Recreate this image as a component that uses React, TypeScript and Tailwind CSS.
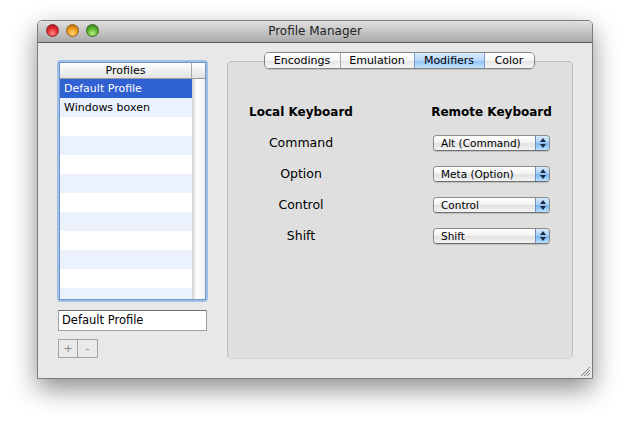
import React from "react";

const rows = Array.from({ length: 12 });

function Popup({ label }: { label: string }) {
  return (
    <div className="ml-[1px] h-[16px] w-[117px] flex rounded-[4px] border border-[#8c8c8c] border-b-[#707070] overflow-hidden shadow-[0_1px_1px_rgba(0,0,0,0.15)]">
      <div className="flex-1 flex items-center pl-[7px] text-[10.5px] text-black bg-[linear-gradient(to_bottom,#ffffff_0%,#f4f4f4_45%,#e2e2e2_55%,#f3f3f3_100%)] leading-none whitespace-nowrap">
        {label}
      </div>
      <div className="w-[14px] border-l border-[#6e8fb8] flex flex-col items-center justify-center gap-[2px] bg-[linear-gradient(to_bottom,#d8ebfd_0%,#a7cff7_45%,#7ab6f0_55%,#b9e0ff_100%)]">
        <svg width="6" height="4" viewBox="0 0 6 4"><path d="M0 4 L3 0 L6 4 Z" fill="#1d2b45" /></svg>
        <svg width="6" height="4" viewBox="0 0 6 4"><path d="M0 0 L3 4 L6 0 Z" fill="#1d2b45" /></svg>
      </div>
    </div>
  );
}

function Light({ c }: { c: string }) {
  return <div className={"w-[13px] h-[13px] rounded-full " + c} />;
}

export default function App() {
  return (
    <div className="w-[635px] h-[431px] bg-white pl-[37px] pt-[20px] font-['DejaVu_Sans',sans-serif] overflow-hidden">
      <div className="w-[556px] h-[359px] rounded-t-[5px] border border-[#7c7c7c] shadow-[0_10px_26px_rgba(0,0,0,0.45)] flex flex-col overflow-hidden">
        {/* title bar */}
        <div className="h-[22px] shrink-0 border-b border-[#5a5a5a] bg-gradient-to-b from-[#e0e0e0] to-[#aaaaaa] grid grid-cols-[1fr_auto_1fr]">
          <div className="flex items-start gap-[7px] pl-[8px] pt-[3px]">
            <Light c="bg-[radial-gradient(circle_at_50%_75%,#ff8a80_0%,#e02a34_50%,#9a0c16_100%)] border border-[#8a2a2a]" />
            <Light c="bg-[radial-gradient(circle_at_50%_75%,#ffd27a_0%,#f09a1c_50%,#ad6206_100%)] border border-[#8a6020]" />
            <Light c="bg-[radial-gradient(circle_at_50%_75%,#b8ee88_0%,#5cb52e_50%,#2a7010_100%)] border border-[#3f6a25]" />
          </div>
          <div className="flex items-center text-[12px] text-[#222] leading-none pb-[1px] whitespace-nowrap">Profile Manager</div>
          <div />
        </div>

        {/* body */}
        <div className="relative flex-1 bg-[#e8e8e8] flex items-start pl-[19px]">
          {/* left column */}
          <div className="mt-[17px] w-[151px] flex flex-col">
            <div className="h-[242px] rounded-[4px] bg-[#9fbfe7] p-[2px]">
              <div className="h-full border border-[#6f97cc] bg-white flex flex-col overflow-hidden">
                <div className="h-[16px] shrink-0 flex border-b border-[#9c9c9c] bg-gradient-to-b from-white to-[#e2e2e2]">
                  <div className="w-[132px] border-r border-[#a8a8a8] flex items-center justify-center text-[11px] leading-none text-black">Profiles</div>
                  <div className="flex-1" />
                </div>
                <div className="flex-1 flex overflow-hidden">
                  <div className="w-[132px] flex flex-col">
                    {rows.map((_, i) => (
                      <div
                        key={i}
                        className={
                          "h-[19px] shrink-0 flex items-center pl-[4px] text-[11px] leading-none " +
                          (i === 0
                            ? "bg-[#2f61d3] text-white"
                            : i % 2 === 1
                            ? "bg-[#ebf1fd] text-black"
                            : "bg-white text-black")
                        }
                      >
                        {i === 0 ? "Default Profile" : i === 1 ? "Windows boxen" : ""}
                      </div>
                    ))}
                  </div>
                  <div className="flex-1 bg-[linear-gradient(to_right,#cfcfcf_0%,#ffffff_35%,#f2f2f2_100%)]" />
                </div>
              </div>
            </div>
            <div className="mt-[8px] ml-[1px] w-[149px] h-[21px] border border-[#a0a0a0] border-t-[#6c6c6c] bg-white flex items-center pl-[3px] text-[11.5px] leading-none text-black">
              Default Profile
            </div>
            <div className="mt-[8px] ml-[1px] flex">
              <div className="w-[20px] h-[19px] border border-[#a4a4a4] bg-[#e9e9e9] flex items-center justify-center text-[11px] text-[#8a8a8a] leading-none">+</div>
              <div className="w-[20px] h-[19px] border border-l-0 border-[#a4a4a4] bg-[#e9e9e9] flex items-center justify-center text-[11px] text-[#8a8a8a] leading-none">-</div>
            </div>
          </div>

          {/* right column */}
          <div className="ml-[19px] mt-[9px] w-[346px] flex flex-col">
            <div className="relative z-10 flex justify-center pr-[2px]">
              <div className="flex h-[17px] rounded-[5px] border border-[#858585] overflow-hidden shadow-[0_1px_1px_rgba(0,0,0,0.15)] text-[11px] leading-none text-black">
                <div className="w-[75px] flex items-center justify-center bg-[linear-gradient(to_bottom,#ffffff_0%,#f5f5f5_50%,#e6e6e6_55%,#f6f6f6_100%)]">Encodings</div>
                <div className="w-[74px] flex items-center justify-center border-l border-[#a9a9a9] bg-[linear-gradient(to_bottom,#ffffff_0%,#f5f5f5_50%,#e6e6e6_55%,#f6f6f6_100%)]">Emulation</div>
                <div className="w-[70px] flex items-center justify-center border-l border-[#7d9ccc] bg-[linear-gradient(to_bottom,#dcecfc_0%,#b6d8f9_50%,#8fc4f5_55%,#c7e6ff_100%)]">Modifiers</div>
                <div className="w-[50px] flex items-center justify-center border-l border-[#7d9ccc] bg-[linear-gradient(to_bottom,#ffffff_0%,#f5f5f5_50%,#e6e6e6_55%,#f6f6f6_100%)]">Color</div>
              </div>
            </div>
            <div className="-mt-[8px] h-[298px] rounded-[5px] border border-[#bdbdbd] border-b-[#cfcfcf] bg-[#dfdfdf] pt-[41px] pl-[20px]">
              <div className="grid grid-cols-[106px_119px] gap-x-[78px] gap-y-[15px] items-center text-black">
                <div className="h-[17px] flex items-center justify-center text-[12px] font-bold leading-none whitespace-nowrap">Local Keyboard</div>
                <div className="h-[17px] flex items-center justify-center text-[12px] font-bold leading-none whitespace-nowrap">Remote Keyboard</div>
                <div className="h-[16px] flex items-center justify-center text-[12.5px] leading-none">Command</div>
                <Popup label="Alt (Command)" />
                <div className="h-[16px] flex items-center justify-center text-[12.5px] leading-none">Option</div>
                <Popup label="Meta (Option)" />
                <div className="h-[16px] flex items-center justify-center text-[12.5px] leading-none">Control</div>
                <Popup label="Control" />
                <div className="h-[16px] flex items-center justify-center text-[12.5px] leading-none">Shift</div>
                <Popup label="Shift" />
              </div>
            </div>
          </div>

          {/* resize grip */}
          <svg className="absolute right-[1px] bottom-[1px]" width="12" height="12" viewBox="0 0 12 12">
            <path d="M11 2 L2 11" stroke="#7a7a7a" strokeWidth="1" />
            <path d="M11 5 L5 11" stroke="#7a7a7a" strokeWidth="1" />
            <path d="M11 8 L8 11" stroke="#7a7a7a" strokeWidth="1" />
          </svg>
        </div>
      </div>
    </div>
  );
}
